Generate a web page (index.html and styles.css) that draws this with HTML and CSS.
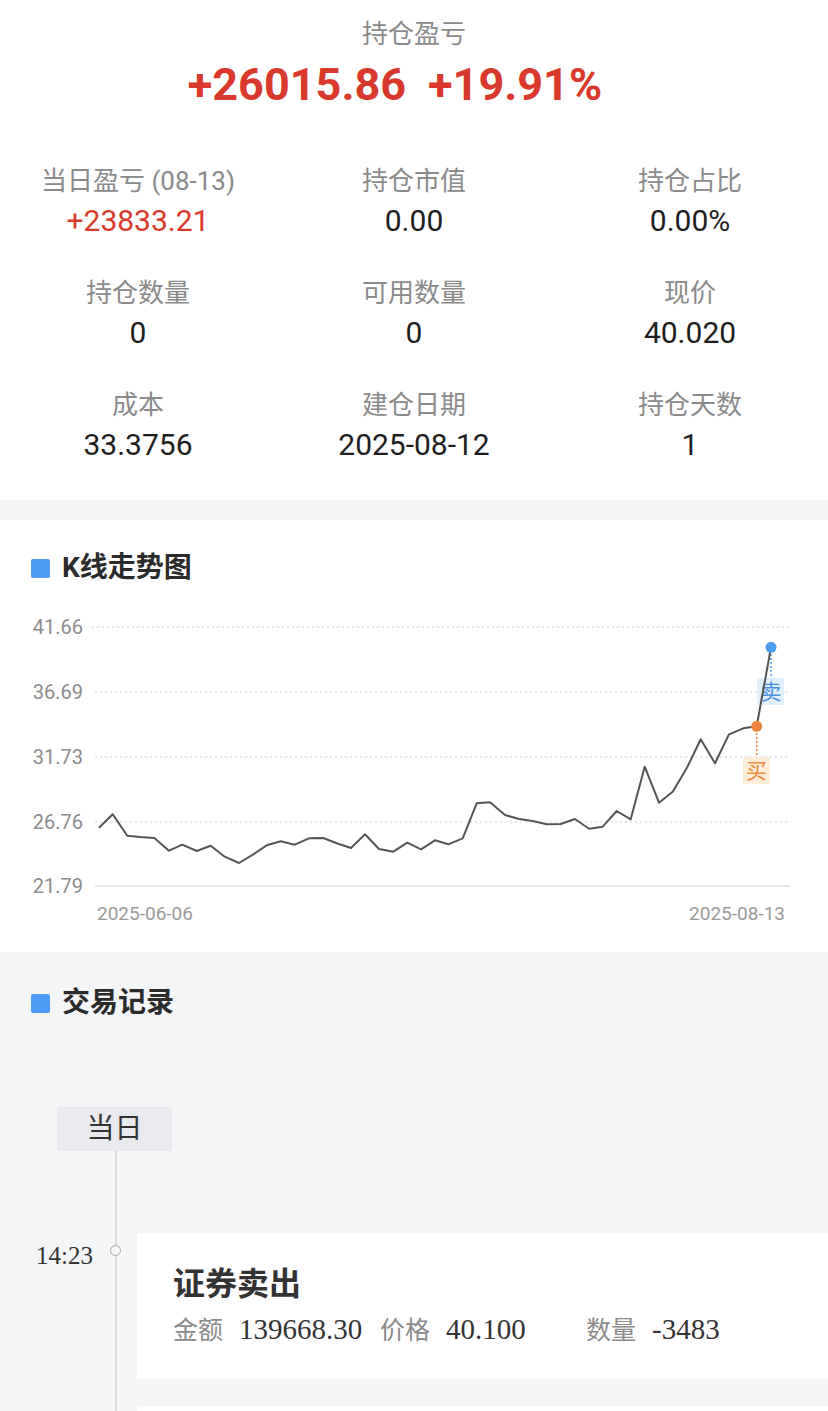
FILE: index.html
```html
<!DOCTYPE html>
<html lang="zh-CN">
<head>
    <meta charset="UTF-8">
    <meta name="viewport" content="width=device-width, initial-scale=1.0">
    <title>持仓详情</title>
    <link rel="stylesheet" href="styles.css">
</head>
<body>
    <!-- 持仓汇总 -->
    <section class="summary">
        <div class="summary-title">持仓盈亏</div>
        <div class="summary-total">
            <span>+26015.86</span>
            <span>+19.91%</span>
        </div>

        <div class="stats">
            <div class="stat">
                <div class="stat-label">当日盈亏 (08-13)</div>
                <div class="stat-value up">+23833.21</div>
            </div>
            <div class="stat">
                <div class="stat-label">持仓市值</div>
                <div class="stat-value">0.00</div>
            </div>
            <div class="stat">
                <div class="stat-label">持仓占比</div>
                <div class="stat-value">0.00%</div>
            </div>
            <div class="stat">
                <div class="stat-label">持仓数量</div>
                <div class="stat-value">0</div>
            </div>
            <div class="stat">
                <div class="stat-label">可用数量</div>
                <div class="stat-value">0</div>
            </div>
            <div class="stat">
                <div class="stat-label">现价</div>
                <div class="stat-value">40.020</div>
            </div>
            <div class="stat">
                <div class="stat-label">成本</div>
                <div class="stat-value">33.3756</div>
            </div>
            <div class="stat">
                <div class="stat-label">建仓日期</div>
                <div class="stat-value">2025-08-12</div>
            </div>
            <div class="stat">
                <div class="stat-label">持仓天数</div>
                <div class="stat-value">1</div>
            </div>
        </div>
    </section>

    <!-- K线走势图 -->
    <section class="chart-card">
        <h2 class="block-title"><span class="block-mark"></span>K线走势图</h2>
        <svg class="chart" width="828" height="330" viewBox="0 0 828 330">
            <g class="grid">
                <line x1="92" y1="27" x2="790" y2="27"></line>
                <line x1="95" y1="92" x2="790" y2="92"></line>
                <line x1="95" y1="157" x2="790" y2="157"></line>
                <line x1="95" y1="222" x2="790" y2="222"></line>
            </g>
            <line class="baseline" x1="95" y1="286" x2="790" y2="286"></line>

            <text class="axis-label" x="83" y="34" text-anchor="end">41.66</text>
            <text class="axis-label" x="83" y="99" text-anchor="end">36.69</text>
            <text class="axis-label" x="83" y="164" text-anchor="end">31.73</text>
            <text class="axis-label" x="83" y="229" text-anchor="end">26.76</text>
            <text class="axis-label" x="83" y="293" text-anchor="end">21.79</text>

            <text class="date-label" x="97" y="320">2025-06-06</text>
            <text class="date-label" x="785" y="320" text-anchor="end">2025-08-13</text>

            <!-- 买卖标记 -->
            <line class="sell-guide" x1="771" y1="54" x2="771" y2="77"></line>
            <rect class="sell-tag" x="757" y="78" width="27" height="27"></rect>
            <text class="sell-text" x="771" y="99" text-anchor="middle">卖</text>

            <line class="buy-guide" x1="756.7" y1="133" x2="756.7" y2="156"></line>
            <rect class="buy-tag" x="743" y="157" width="27" height="27"></rect>
            <text class="buy-text" x="756.5" y="178" text-anchor="middle">买</text>

            <polyline class="price-line" points="99,227.7 112.7,214.3 127.3,235.7 140,237 154.3,238 169,250.7 182.3,244.7 196.7,251 210.7,245.7 224.7,256.7 239,263 253.3,254.3 266.7,245.3 280.7,241.3 294.7,244.7 309,238.3 323.3,238 336.7,243.3 351,248 365,234.3 379,249 393.3,251.7 407.3,242.7 421,249.3 435,240.3 448.3,244.3 462.7,238.3 476.7,203.3 490,202.3 505,215 519,219 532.7,221 546.7,224.3 560.7,224 575,219 589,228.7 602.7,226.7 616.7,211 630.7,219.3 644.7,166.7 659,202.7 672.7,191.7 686.7,168.3 700.7,139.3 715,163.3 729,134.3 743.3,128.3 756.7,126.3 771,47.3"></polyline>

            <circle class="sell-dot" cx="771" cy="47.3" r="5.5"></circle>
            <circle class="buy-dot" cx="756.7" cy="126.3" r="5.5"></circle>
        </svg>
    </section>

    <!-- 交易记录 -->
    <section class="records">
        <h2 class="block-title"><span class="block-mark"></span>交易记录</h2>

        <div class="day-tag">当日</div>
        <div class="timeline">
            <div class="record">
                <div class="record-time">14:23</div>
                <div class="record-dot"><span></span></div>
                <div class="record-card">
                    <div class="record-title">证券卖出</div>
                    <div class="record-info">
                        <span class="info-item"><span class="info-label">金额</span>139668.30</span>
                        <span class="info-item"><span class="info-label">价格</span>40.100</span>
                        <span class="info-item"><span class="info-label">数量</span>-3483</span>
                    </div>
                </div>
            </div>
            <!-- siguiente registro, cortado por el borde inferior -->
            <div class="record">
                <div class="record-time"></div>
                <div class="record-dot"></div>
                <div class="record-card record-card-next"></div>
            </div>
        </div>
    </section>
</body>
</html>
```

FILE: styles.css
```css
/* Estilos generales */
body {
    margin: 0;
    background-color: #f4f5f7;
    font-family: Roboto, "Noto Sans CJK SC", sans-serif;
    color: #222;
    overflow-x: hidden;
}

/* Resumen */
.summary {
    background-color: #fff;
    padding: 16px 0 35px;
    text-align: center;
}
.summary-title {
    font-size: 26px;
    line-height: 36px;
    color: #8a8a8a;
}
.summary-total {
    margin-top: 5px;
    padding-right: 38px;
    display: flex;
    justify-content: center;
    gap: 22px;
    font-size: 45px;
    line-height: 56px;
    font-weight: 700;
    color: #d8392c;
}
.stats {
    margin-top: 50px;
    display: grid;
    grid-template-columns: repeat(3, 1fr);
    row-gap: 34px;
}
.stat-label {
    font-size: 26px;
    line-height: 36px;
    color: #8a8a8a;
}
.stat-value {
    margin-top: 2px;
    font-size: 30px;
    line-height: 40px;
    color: #1e1e1e;
}
.stat-value.up {
    color: #d8392c;
}

/* Titulos de bloque */
.block-title {
    margin: 0;
    display: flex;
    align-items: center;
    gap: 12px;
    padding-left: 31px;
    font-size: 28px;
    line-height: 40px;
    font-weight: 700;
    color: #2b2b2b;
}
.block-mark {
    width: 19px;
    height: 19px;
    border-radius: 2px;
    background-color: #4c9cf6;
}

/* Grafico */
.chart-card {
    margin-top: 20px;
    background-color: #fff;
    padding: 28px 0 22px;
}
.chart {
    display: block;
    margin-top: 12px;
}
.grid line {
    stroke: #cfcfcf;
    stroke-width: 1;
    stroke-dasharray: 2 3;
}
.baseline {
    stroke: #e2e2e2;
    stroke-width: 1.5;
}
.axis-label {
    font-family: Roboto, sans-serif;
    font-size: 20px;
    fill: #8c8c8c;
}
.date-label {
    font-family: Roboto, sans-serif;
    font-size: 19px;
    fill: #9a9a9a;
}
.price-line {
    fill: none;
    stroke: #555;
    stroke-width: 2;
    stroke-linejoin: round;
}
.sell-dot {
    fill: #4b9cec;
}
.buy-dot {
    fill: #ea8340;
}
.sell-guide {
    stroke: #4b9cec;
    stroke-width: 1.5;
    stroke-dasharray: 2 2;
}
.buy-guide {
    stroke: #ea8340;
    stroke-width: 1.5;
    stroke-dasharray: 2 2;
}
.sell-tag {
    fill: #e1eefc;
}
.buy-tag {
    fill: #fdecd8;
}
.sell-text,
.buy-text {
    font-family: "Noto Sans CJK SC", sans-serif;
    font-size: 21px;
}
.sell-text {
    fill: #4a90e2;
}
.buy-text {
    fill: #ec8a3c;
}

/* Registros */
.records {
    padding-top: 31px;
}
.day-tag {
    margin: 84px 0 0 57px;
    width: 115px;
    height: 44px;
    line-height: 44px;
    text-align: center;
    font-size: 28px;
    color: #333;
    background-color: #e8eaed;
    border-radius: 2px 2px 0 0;
}
.timeline {
    padding-top: 82px;
    background: linear-gradient(#dadada, #dadada) no-repeat 115px 0 / 2px 100%;
}
.record {
    display: flex;
    align-items: flex-start;
    margin-bottom: 27px;
}
.record-time {
    width: 93px;
    padding-top: 8px;
    text-align: right;
    font-family: "Liberation Serif", "Noto Sans CJK SC", serif;
    font-size: 25px;
    line-height: 30px;
    color: #333;
}
.record-dot {
    width: 44px;
    display: flex;
    justify-content: center;
    padding-top: 12px;
}
.record-dot span {
    width: 9px;
    height: 9px;
    border: 1.5px solid #a8a8a8;
    border-radius: 50%;
    background-color: #f4f5f7;
}
.record-card {
    flex: 1;
    background-color: #fff;
    padding: 26px 0 30px 36px;
}
.record-card-next {
    height: 90px;
}
.record-title {
    font-family: "Noto Sans CJK SC", sans-serif;
    font-size: 32px;
    line-height: 44px;
    font-weight: 700;
    color: #333;
}
.record-info {
    margin-top: 5px;
    display: grid;
    grid-template-columns: 207px 206px auto;
    font-family: "Liberation Serif", "Noto Sans CJK SC", serif;
    font-size: 29px;
    line-height: 40px;
    color: #333;
}
.info-label {
    margin-right: 16px;
    font-family: "Noto Sans CJK SC", sans-serif;
    font-size: 25px;
    color: #8a8a8a;
}
```
